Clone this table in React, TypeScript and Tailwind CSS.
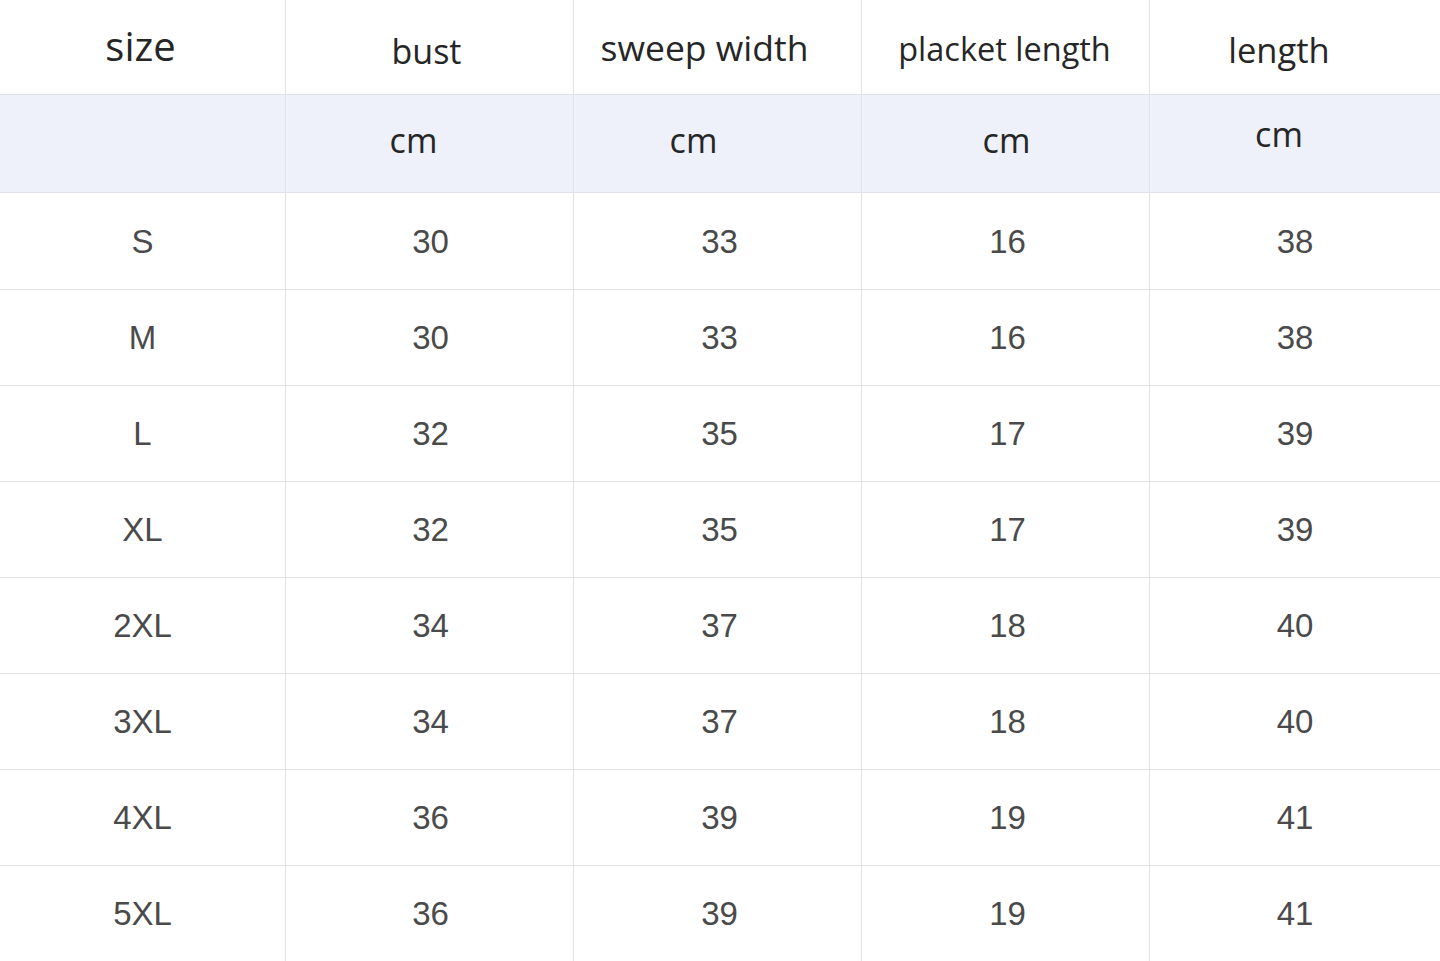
import React from "react";

const headers = [
  { t: "size", cls: "text-[40px]", dx: "pr-[4px]", dy: "pb-[2px]" },
  { t: "bust", cls: "text-[34px]", dx: "pr-[6px]", dy: "pt-[8px]" },
  { t: "sweep width", cls: "text-[35.5px]", dx: "pr-[26px]", dy: "pt-[2px]" },
  { t: "placket length", cls: "text-[32.5px]", dx: "pr-[2px]", dy: "pt-[4px]" },
  { t: "length", cls: "text-[34.5px]", dx: "pr-[32px]", dy: "pt-[6px]" },
];

const rows = [
  ["S", "30", "33", "16", "38"],
  ["M", "30", "33", "16", "38"],
  ["L", "32", "35", "17", "39"],
  ["XL", "32", "35", "17", "39"],
  ["2XL", "34", "37", "18", "40"],
  ["3XL", "34", "37", "18", "40"],
  ["4XL", "36", "39", "19", "41"],
  ["5XL", "36", "39", "19", "41"],
];

const dataOffsets = ["pr-[0px]", "pl-[2px]", "pl-[4px]", "pl-[4px]", "pl-[0px]"];
const cmOffsets = ["pb-[8px]", "pr-[32px] pb-[8px]", "pr-[48px] pb-[8px]", "pl-[2px] pb-[8px]", "pr-[32px] pb-[20px]"];

export default function App() {
  return (
    <div className="w-[1440px] h-[961px] bg-white overflow-hidden">
      <div className="grid grid-cols-[286px_288px_288px_288px_290px] grid-rows-[95px_98px_97px_96px_96px_96px_96px_96px_96px_95px] w-full h-full">
        {headers.map((h, i) => (
          <div
            key={"h" + i}
            className={`flex items-center justify-center border-b border-[#e1e3e8] ${i < 4 ? "border-r" : ""} ${h.dx} ${h.dy} bg-white`}
          >
            <span className={`${h.cls} text-[#262626] font-['Open_Sans',sans-serif] leading-none`}>{h.t}</span>
          </div>
        ))}
        {[0, 1, 2, 3, 4].map((i) => (
          <div
            key={"c" + i}
            className={`flex items-center justify-center bg-[#eef1f9] border-b border-[#dfe2e8] ${i < 4 ? "border-r border-r-[#e3e6ee]" : ""} ${cmOffsets[i]}`}
          >
            {i > 0 && (
              <span className="text-[34px] text-[#262626] font-['Open_Sans',sans-serif] leading-none">cm</span>
            )}
          </div>
        ))}
        {rows.map((r, ri) =>
          r.map((v, ci) => (
            <div
              key={ri + "-" + ci}
              className={`flex items-center justify-center ${ri < rows.length - 1 ? "border-b" : ""} border-[#e3e3e3] ${ci < 4 ? "border-r" : ""} ${dataOffsets[ci]}`}
            >
              <span className="text-[33px] text-[#4a4a4a] font-['Liberation_Sans',Arial,sans-serif] leading-none">{v}</span>
            </div>
          ))
        )}
      </div>
    </div>
  );
}
